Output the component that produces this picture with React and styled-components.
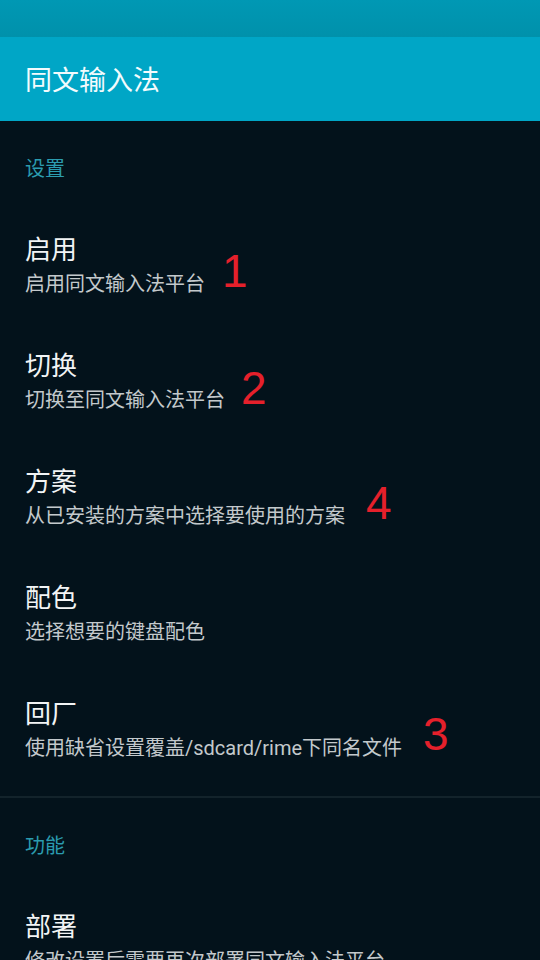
import React from 'react'
import styled, { createGlobalStyle } from 'styled-components'

const GlobalStyle = createGlobalStyle`
  html, body {
    margin: 0;
    padding: 0;
    background: #03121b;
  }
  body {
    font-family: Roboto, "Noto Sans CJK SC", sans-serif;
  }
`

const Screen = styled.div`
  width: 540px;
  height: 960px;
  overflow: hidden;
  background: #03121b;
  display: flex;
  flex-direction: column;
`

const StatusBar = styled.div`
  height: 37px;
  flex: 0 0 37px;
  background: linear-gradient(#0098b4, #0091ab);
`

const Toolbar = styled.header`
  height: 84px;
  flex: 0 0 84px;
  background: #00a6c6;
  display: flex;
  align-items: center;
  padding: 0 25px;
  box-sizing: border-box;

  h1 {
    margin: 0 0 2px;
    font-size: 27px;
    font-weight: 400;
    color: #f3fbfd;
    font-family: Roboto, "Noto Sans CJK SC", sans-serif;
  }
`

const Group = styled.section`
  display: flex;
  flex-direction: column;
  padding-bottom: ${(p) => (p.$last ? 0 : 9)}px;
  border-bottom: ${(p) => (p.$last ? 'none' : '2px solid #13232b')};
`

const GroupTitle = styled.h2`
  margin: 36px 0 26px;
  padding: 0 25px;
  font-size: 20px;
  line-height: 24px;
  font-weight: 400;
  color: #2b9caf;
`

const Item = styled.div`
  position: relative;
  padding: 26px 25px;
  display: flex;
  flex-direction: column;
  gap: 4px;
`

const ItemTitle = styled.div`
  font-size: 26px;
  line-height: 34px;
  color: #f2f4f5;
`

const ItemSummary = styled.div`
  font-size: 20px;
  line-height: 26px;
  color: #c3c9cc;
  white-space: nowrap;
`

const Mark = styled.span`
  position: absolute;
  left: ${(p) => p.$x}px;
  top: ${(p) => p.$y}px;
  font-family: "Liberation Sans", Arial, sans-serif;
  font-size: 46px;
  line-height: 1;
  color: #e5202b;
`

const groups = [
  {
    title: '设置',
    items: [
      { title: '启用', summary: '启用同文输入法平台', mark: { n: '1', x: 222, y: 41 } },
      { title: '切换', summary: '切换至同文输入法平台', mark: { n: '2', x: 241, y: 42 } },
      { title: '方案', summary: '从已安装的方案中选择要使用的方案', mark: { n: '4', x: 366, y: 41 } },
      { title: '配色', summary: '选择想要的键盘配色' },
      { title: '回厂', summary: '使用缺省设置覆盖/sdcard/rime下同名文件', mark: { n: '3', x: 423, y: 40 } },
    ],
  },
  {
    title: '功能',
    items: [{ title: '部署', summary: '修改设置后需要再次部署同文输入法平台' }],
  },
]

const App = () => (
  <Screen>
    <GlobalStyle />
    <StatusBar />
    <Toolbar>
      <h1>同文输入法</h1>
    </Toolbar>
    {groups.map((g, gi) => (
      <Group key={g.title} $last={gi === groups.length - 1}>
        <GroupTitle>{g.title}</GroupTitle>
        {g.items.map((it) => (
          <Item key={it.title}>
            <ItemTitle>{it.title}</ItemTitle>
            <ItemSummary>{it.summary}</ItemSummary>
            {it.mark && (
              <Mark $x={it.mark.x} $y={it.mark.y}>
                {it.mark.n}
              </Mark>
            )}
          </Item>
        ))}
      </Group>
    ))}
  </Screen>
)

export default App
